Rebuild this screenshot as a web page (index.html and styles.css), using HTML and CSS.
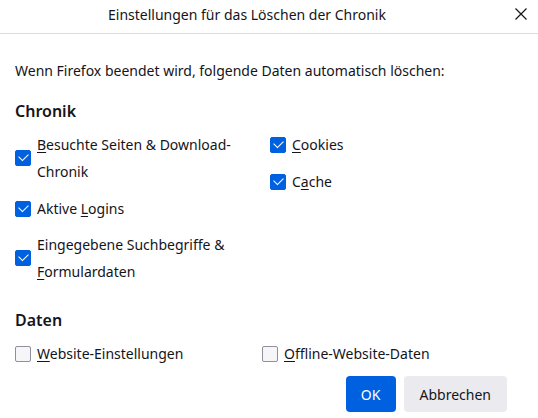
FILE: index.html
```html
<!DOCTYPE html>
<html lang="de">
<head>
<meta charset="utf-8">
<link rel="stylesheet" href="styles.css">
</head>
<body>
<div class="dialog">
  <header class="titlebar">
    <div class="title">Einstellungen für das Löschen der Chronik</div>
    <button class="close" aria-label="Schließen">
      <svg width="12" height="12" viewBox="0 0 12 12"><path d="M0.5 0.5L11.5 11.5M11.5 0.5L0.5 11.5" stroke="#15141a" stroke-width="1.2" fill="none"/></svg>
    </button>
  </header>
  <main class="content">
    <p class="intro">Wenn Firefox beendet wird, folgende Daten automatisch löschen:</p>
    <h2 class="section">Chronik</h2>
    <div class="grid history">
      <div class="col">
        <label class="check"><span class="box on"></span><span class="text"><u>B</u>esuchte Seiten &amp; Download-<br>Chronik</span></label>
        <label class="check"><span class="box on"></span><span class="text">Aktive <u>L</u>ogins</span></label>
        <label class="check tight"><span class="box on"></span><span class="text">Eingegebene Suchbegriffe &amp;<br><u>F</u>ormulardaten</span></label>
      </div>
      <div class="col right">
        <label class="check"><span class="box on"></span><span class="text"><u>C</u>ookies</span></label>
        <label class="check"><span class="box on"></span><span class="text">C<u>a</u>che</span></label>
      </div>
    </div>
    <h2 class="section data">Daten</h2>
    <div class="grid datarow">
      <label class="check"><span class="box"></span><span class="text"><u>W</u>ebsite-Einstellungen</span></label>
      <label class="check"><span class="box"></span><span class="text"><u>O</u>ffline-Website-Daten</span></label>
    </div>
    <div class="buttons">
      <button class="btn primary">OK</button>
      <button class="btn">Abbrechen</button>
    </div>
  </main>
</div>
</body>
</html>
```

FILE: styles.css
```css
* { box-sizing: border-box; }
html, body { margin: 0; padding: 0; background: #fff; }
body {
  font-family: "Noto Sans", "Open Sans", sans-serif;
  font-size: 14px;
  color: #15141a;
}
.dialog { width: 538px; height: 418px; }
.titlebar {
  height: 34px;
  border-bottom: 1px solid #dcdce0;
  display: flex;
  align-items: center;
  justify-content: center;
  padding-right: 44px;
  position: relative;
}
.title { font-size: 14px; margin-top: -4px; }
.close {
  position: absolute;
  right: 10px;
  top: 7px;
  width: 14px;
  height: 14px;
  padding: 0;
  border: 0;
  background: none;
  display: flex;
  align-items: center;
  justify-content: center;
}
.content { padding: 0 15px; }
.intro { margin: 26px 0 0; line-height: 22px; }
.section {
  font-size: 16px;
  font-weight: 600;
  margin: 18px 0 0;
  line-height: 22px;
}
.section.data { margin-top: 24px; }
.grid { display: grid; }
.history { grid-template-columns: 255px 1fr; margin-top: 9px; }
.datarow { grid-template-columns: 247px 1fr; margin-top: 9px; }
.col { display: flex; flex-direction: column; gap: 10px; }
.col .check.tight { margin-top: -1px; }
.col.right { gap: 10px; }
.check { display: flex; align-items: center; gap: 6px; line-height: 27px; }
.box {
  width: 16px;
  height: 16px;
  border-radius: 2px;
  border: 1px solid #8f8f9d;
  background: #f6f6f8;
  flex: none;
  position: relative;
}
.box.on { background: #0061e0; border-color: #0061e0; }
.box.on::after {
  content: "";
  position: absolute;
  left: 3px;
  top: 2px;
  width: 8px;
  height: 5px;
  border-left: 1.3px solid #fff;
  border-bottom: 1.3px solid #fff;
  transform: rotate(-45deg);
  transform-origin: center;
}
.text u { text-decoration-thickness: 1px; text-underline-offset: 2px; }
.buttons {
  display: flex;
  justify-content: flex-end;
  gap: 8px;
  margin-top: 9px;
  padding-right: 16px;
}
.btn {
  font-family: inherit;
  font-size: 14px;
  height: 36px;
  padding: 0 16px;
  border: 0;
  border-radius: 4px;
  background: #ebebef;
  color: #15141a;
}
.btn.primary { background: #0061e0; color: #fff; width: 50px; padding: 0; }
```
